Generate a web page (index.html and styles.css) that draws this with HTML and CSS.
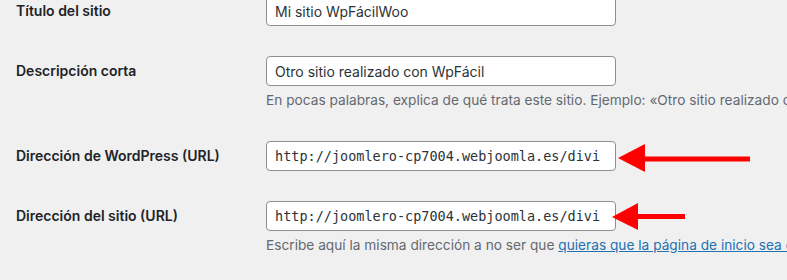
FILE: index.html
```html
<!DOCTYPE html>
<html lang="es">
<head>
<meta charset="utf-8">
<title>Ajustes generales</title>
<link rel="stylesheet" href="styles.css">
</head>
<body>
<div class="page">
  <div class="form">
    <div class="row">
      <label class="label" for="t">Título del sitio</label>
      <div class="field"><input id="t" class="input" type="text" value="Mi sitio WpFácilWoo"></div>
    </div>
    <div class="row">
      <label class="label" for="d">Descripción corta</label>
      <div class="field">
        <input id="d" class="input" type="text" value="Otro sitio realizado con WpFácil">
        <p class="description">En pocas palabras, explica de qué trata este sitio. Ejemplo: «Otro sitio realizado con WordPress».</p>
      </div>
    </div>
    <div class="row">
      <label class="label" for="w">Dirección de WordPress (URL)</label>
      <div class="field"><input id="w" class="input code" type="text" value="http://joomlero-cp7004.webjoomla.es/divi"></div>
    </div>
    <div class="row">
      <label class="label" for="s">Dirección del sitio (URL)</label>
      <div class="field">
        <input id="s" class="input code" type="text" value="http://joomlero-cp7004.webjoomla.es/divi">
        <p class="description">Escribe aquí la misma dirección a no ser que <a href="#">quieras que la página de inicio sea diferente al directorio de instalación</a>.</p>
      </div>
    </div>
  </div>
  <svg class="arrows" width="787" height="280" viewBox="0 0 787 280">
    <rect x="640" y="156.5" width="110" height="5" fill="#ff0000"/>
    <polygon points="618,158 645,144 645,172" fill="#ff0000"/>
    <rect x="634" y="214" width="51" height="5" fill="#ff0000"/>
    <polygon points="612,217 638,203 638,230" fill="#ff0000"/>
  </svg>
</div>
</body>
</html>
```

FILE: styles.css
```css
html, body {
  margin: 0;
  padding: 0;
  background: #f0f0f1;
}
body {
  font-family: Inter, "Liberation Sans", sans-serif;
  font-size: 14px;
  color: #1d2327;
  width: 787px;
  height: 280px;
  overflow: hidden;
}
.page {
  position: relative;
  width: 787px;
  height: 280px;
  overflow: hidden;
}
.form {
  margin-top: -19px;
  padding-left: 16px;
}
.row {
  display: flex;
  padding: 15px 0;
}
.label {
  width: 250px;
  flex: none;
  font-weight: 600;
  font-size: 14px;
  line-height: 20px;
  padding-top: 5px;
  color: #1d2327;
}
.field {
  flex: none;
  white-space: nowrap;
}
.input {
  display: block;
  box-sizing: border-box;
  width: 350px;
  height: 30px;
  margin: 0;
  padding: 0 8px;
  border: 1px solid #8c8f94;
  border-radius: 4px;
  background: #fff;
  font-family: Inter, "Liberation Sans", sans-serif;
  font-size: 14px;
  color: #2c3338;
  outline: none;
}
.input.code {
  font-family: "DejaVu Sans Mono", monospace;
  font-size: 13.5px;
}
.description {
  margin: 4px 0 0;
  font-size: 13.7px;
  line-height: 21px;
  color: #646970;
}
.description a {
  color: #2271b1;
  text-decoration: underline;
}
.arrows {
  position: absolute;
  left: 0;
  top: 0;
  pointer-events: none;
}
```
